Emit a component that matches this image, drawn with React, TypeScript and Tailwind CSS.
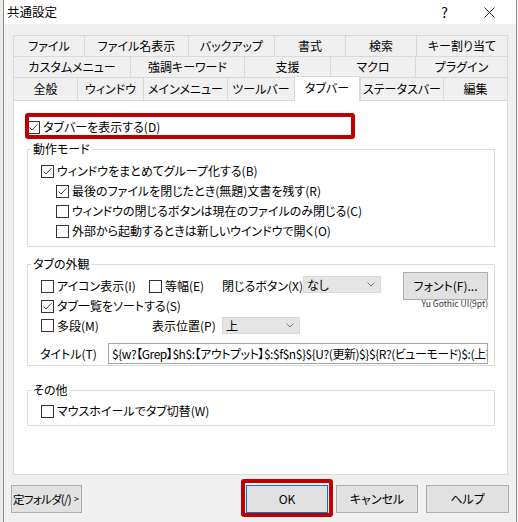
import React from "react";

const FONT =
  "font-['Noto_Sans_CJK_JP','Noto_Sans',sans-serif] [font-feature-settings:'palt']";

type TabDef = { label: string; w: string; sel?: boolean };

const ROW1: TabDef[] = [
  { label: "ファイル", w: "w-[71px]" },
  { label: "ファイル名表示", w: "w-[104px]" },
  { label: "バックアップ", w: "w-[86px]" },
  { label: "書式", w: "w-[71px]" },
  { label: "検索", w: "w-[71px]" },
  { label: "キー割り当て", w: "w-[92px]" },
];

const ROW2: TabDef[] = [
  { label: "カスタムメニュー", w: "w-[117px]" },
  { label: "強調キーワード", w: "w-[114px]" },
  { label: "支援", w: "w-[86px]" },
  { label: "マクロ", w: "w-[85px]" },
  { label: "プラグイン", w: "w-[93px]" },
];

const ROW3: TabDef[] = [
  { label: "全般", w: "w-[64px]" },
  { label: "ウィンドウ", w: "w-[66px]" },
  { label: "メインメニュー", w: "w-[84px]" },
  { label: "ツールバー", w: "w-[67px]" },
  { label: "タブバー", w: "w-[66px]", sel: true },
  { label: "ステータスバー", w: "w-[83px]" },
  { label: "編集", w: "w-[65px]" },
];

function TabRow({ tabs, h }: { tabs: TabDef[]; h: string }) {
  return (
    <div className={`flex ${h}`}>
      {tabs.map((t, i) => {
        const last = i === tabs.length - 1;
        if (t.sel) {
          return (
            <div
              key={t.label}
              className={`${t.w} relative z-10 -mt-px -mb-px h-[25px] bg-white border-x border-t border-[#d9d9d9] flex items-center justify-center pb-[3px] leading-[16px]`}
            >
              {t.label}
            </div>
          );
        }
        return (
          <div
            key={t.label}
            className={`${t.w} bg-[#f0f0f0] border-t border-l border-[#d9d9d9] ${
              last ? "border-r" : ""
            } flex items-center justify-center leading-[16px]`}
          >
            {t.label}
          </div>
        );
      })}
    </div>
  );
}

function Box({ checked }: { checked?: boolean }) {
  return (
    <span className="w-[13px] h-[13px] border border-[#333333] bg-white flex items-center justify-center shrink-0">
      {checked && (
        <svg width="11" height="11" viewBox="0 0 11 11">
          <path d="M1.5 5.5 L4 8 L9.5 2.2" fill="none" stroke="#444444" strokeWidth="1" />
        </svg>
      )}
    </span>
  );
}

function Check({
  label,
  checked,
  className = "",
}: {
  label: string;
  checked?: boolean;
  className?: string;
}) {
  return (
    <div className={`flex items-center gap-[3px] h-[20px] ${className}`}>
      <Box checked={checked} />
      <span className="leading-[16px] whitespace-nowrap">{label}</span>
    </div>
  );
}

function Chevron() {
  return (
    <svg width="8" height="5" viewBox="0 0 8 5" className="ml-auto shrink-0">
      <path d="M0.5 0.5 L4 4 L7.5 0.5" fill="none" stroke="#7a7a7a" strokeWidth="1" />
    </svg>
  );
}

function Select({ value, w }: { value: string; w: string }) {
  return (
    <div
      className={`${w} h-[17px] bg-[#e5e5e5] border border-[#dadada] flex items-center pl-[3px] pr-[5px] leading-[15px]`}
    >
      <span>{value}</span>
      <Chevron />
    </div>
  );
}

function Group({
  title,
  className = "",
  children,
}: {
  title: string;
  className?: string;
  children: React.ReactNode;
}) {
  return (
    <div className={`relative w-[468px] border border-[#dcdcdc] ${className}`}>
      <span className="absolute -top-[9px] left-[3px] bg-white px-[2px] leading-[16px]">
        {title}
      </span>
      {children}
    </div>
  );
}

function Button({ label, w, focus }: { label: string; w: string; focus?: boolean }) {
  return (
    <div
      className={`${w} h-[28px] bg-[#e1e1e1] border ${
        focus ? "border-[#0078d7]" : "border-[#adadad]"
      } flex items-center justify-center leading-[16px] shrink-0`}
    >
      {label}
    </div>
  );
}

export default function App() {
  const titleText = "${w?【Grep】$h$:【アウトプット】$:$f$n$}${U?(更新)$}${R?(ビューモード)$:(上書き禁止)$}";
  return (
    <div
      className={`w-[518px] h-[522px] flex bg-[#f3f3f3] overflow-hidden text-[12px] text-black ${FONT}`}
    >
      <div className="w-[3px] shrink-0 bg-[#ececec]" />
      <div className="w-[514px] h-full shrink-0 border-x border-[#8c8c8c] bg-[#f0f0f0] flex flex-col">
        {/* caption */}
        <div className="h-[24px] shrink-0 bg-white flex items-center">
          <span className="ml-[3px] text-[12.5px] leading-[16px]">共通設定</span>
          <span className="ml-auto w-[46px] flex justify-center text-[14px] leading-[16px] pl-[3px]">?</span>
          <span className="w-[46px] mr-[4px] flex justify-center">
            <svg width="11" height="11" viewBox="0 0 11 11">
              <path d="M0.5 0.5 L10.5 10.5 M10.5 0.5 L0.5 10.5" stroke="#222" strokeWidth="1" />
            </svg>
          </span>
        </div>

        {/* client area */}
        <div className="flex-1 pl-[9px] pt-[11px] flex flex-col">
          <div className="w-[495px] flex flex-col">
            <TabRow tabs={ROW1} h="h-[21px]" />
            <TabRow tabs={ROW2} h="h-[21px]" />
            <TabRow tabs={ROW3} h="h-[23px]" />

            {/* page */}
            <div className="h-[375px] bg-white border border-[#d9d9d9] pl-[13px] pt-[16px] flex flex-col">
              <div className="relative">
                <Check label="タブバーを表示する(D)" checked />
                <div className="absolute -left-[2px] -top-[4px] w-[330px] h-[26px] border-[4px] border-[#c00000] rounded-[3px]" />
              </div>

              <Group title="動作モード" className="mt-[12px] pl-[13px] pt-[11px] pb-[5px]">
                <Check label="ウィンドウをまとめてグループ化する(B)" checked />
                <Check
                  className="ml-[15px]"
                  label="最後のファイルを閉じたとき(無題)文書を残す(R)"
                  checked
                />
                <Check
                  className="ml-[15px]"
                  label="ウィンドウの閉じるボタンは現在のファイルのみ閉じる(C)"
                />
                <Check
                  className="ml-[15px]"
                  label="外部から起動するときは新しいウインドウで開く(O)"
                />
              </Group>

              <Group title="タブの外観" className="mt-[17px] pl-[13px] pr-[6px] pt-[11px] pb-[1px]">
                <div className="flex items-center h-[20px]">
                  <Check className="w-[108px]" label="アイコン表示(I)" />
                  <Check className="w-[73px]" label="等幅(E)" />
                  <span className="w-[81px] leading-[16px] whitespace-nowrap">閉じるボタン(X)</span>
                  <div className="mb-[4px]">
                    <Select value="なし" w="w-[78px]" />
                  </div>
                  <div className="ml-auto mb-[1px]">
                    <Button label="フォント(F)..." w="w-[85px] h-[21px]" />
                  </div>
                </div>
                <div className="flex items-center h-[20px]">
                  <Check label="タブ一覧をソートする(S)" checked />
                  <span className="ml-auto mb-[6px] text-[8.5px] leading-[10px] text-[#333]">
                    Yu Gothic UI(9pt)
                  </span>
                </div>
                <div className="flex items-center h-[19px]">
                  <Check className="w-[111px]" label="多段(M)" />
                  <span className="w-[70px] leading-[16px] whitespace-nowrap">表示位置(P)</span>
                  <Select value="上" w="w-[78px]" />
                </div>
                <div className="flex items-center mt-[8px] h-[21px]">
                  <span className="w-[68px] -ml-px leading-[16px] whitespace-nowrap">タイトル(T)</span>
                  <div className="w-[380px] h-[21px] border border-[#a6a6a6] bg-white flex items-center pl-[3px] overflow-hidden">
                    <span className="whitespace-nowrap leading-[16px] tracking-[-0.45px]">{titleText}</span>
                  </div>
                </div>
              </Group>

              <Group title="その他" className="mt-[24px] pl-[13px] pt-[10px] pb-[4px]">
                <Check label="マウスホイールでタブ切替(W)" />
              </Group>
            </div>
          </div>

          {/* dialog buttons */}
          <div className="mt-[10px] -ml-[2px] w-[498px] flex items-center">
            <div className="w-[71px] h-[28px] bg-[#e1e1e1] border border-[#adadad] flex items-center pl-[1px] shrink-0">
              <span className="whitespace-nowrap leading-[16px] text-[11.5px] tracking-[-0.7px]">定フォルダ(/)</span>
              <span className="ml-[3px] text-[9px] leading-[16px] shrink-0">&gt;</span>
            </div>
            <div className="relative ml-[164px]">
              <Button label="OK" w="w-[82px]" focus />
              <div className="absolute -left-[5px] -top-[6px] w-[92px] h-[38px] border-[4px] border-[#c00000] rounded-[3px]" />
            </div>
            <div className="ml-[8px]">
              <Button label="キャンセル" w="w-[82px]" />
            </div>
            <div className="ml-[8px]">
              <Button label="ヘルプ" w="w-[83px]" />
            </div>
          </div>
        </div>
      </div>
      <div className="flex-1 bg-[#f6f6f6]" />
    </div>
  );
}
